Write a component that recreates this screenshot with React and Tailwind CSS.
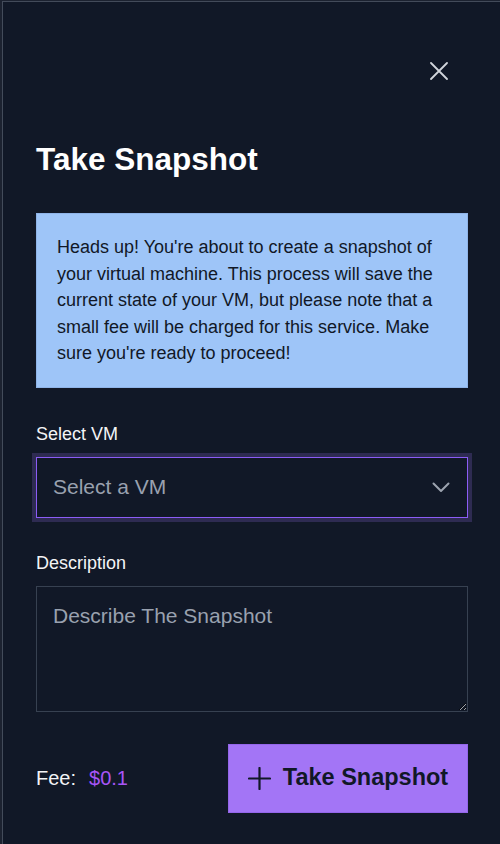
import React, { useState } from 'react';

const XIcon = () => (
  <svg width="18" height="18" viewBox="0 0 18 18" fill="none" stroke="#d1d5db" strokeWidth="1.8" strokeLinecap="round">
    <path d="M1 1L17 17M17 1L1 17" />
  </svg>
);

const ChevronIcon = () => (
  <svg width="18" height="11" viewBox="0 0 18 11" fill="none" stroke="#9ca3af" strokeWidth="2" strokeLinecap="round" strokeLinejoin="round">
    <path d="M1.5 1.5L9 9L16.5 1.5" />
  </svg>
);

const PlusIcon = () => (
  <svg width="23" height="23" viewBox="0 0 23 23" fill="none" stroke="#111827" strokeWidth="2.2" strokeLinecap="round">
    <path d="M11.5 1V22M1 11.5H22" />
  </svg>
);

const App = () => {
  const [description, setDescription] = useState('');

  return (
    <div className="min-h-[844px] bg-[#1c2230] pl-[2px] pt-px font-['Liberation_Sans',Arial,sans-serif]">
      <div className="min-h-[843px] border-l border-t border-[#434b5a] bg-[#111827] pl-[33px] pr-[32px] pt-[60px]">
        {/* close */}
        <div className="flex h-[18px] justify-end pr-5">
          <button type="button" className="block">
            <XIcon />
          </button>
        </div>

        <h2 className="mt-[61px] text-[31.5px] font-bold leading-[36px] text-white">Take Snapshot</h2>

        {/* warning */}
        <div className="mt-[36px] border border-[#8fb4e8] bg-[#9ec5f8] p-5 text-[18px] leading-[26.5px] text-[#111827]">
          Heads up! You're about to create a snapshot of your virtual machine. This process will save the current
          state of your VM, but please note that a small fee will be charged for this service. Make sure you're ready
          to proceed!
        </div>

        <label className="mt-8 mb-[9px] block text-[18px] leading-[28px] text-gray-100">Select VM</label>
        <button
          type="button"
          className="flex h-[61px] w-full items-center justify-between border border-[#8b5cf6] bg-[#111827] pl-4 pr-[17px] ring-4 ring-[#2e2b52]"
        >
          <span className="text-[21px] text-gray-400">Select a VM</span>
          <ChevronIcon />
        </button>

        <label className="mt-[31px] mb-[9px] block text-[18px] leading-[28px] text-gray-100">Description</label>
        <textarea
          value={description}
          onChange={(e) => setDescription(e.target.value)}
          placeholder="Describe The Snapshot"
          className="block h-[126px] w-full border border-[#374151] bg-transparent px-4 py-[15px] text-[21px] leading-[28px] text-gray-100 placeholder:text-gray-400 outline-none"
        />

        <div className="mt-8 flex items-center justify-between">
          <div className="text-[20px] text-gray-100">
            Fee:<span className="ml-[13px] text-[#a855f7]">$0.1</span>
          </div>
          <button
            type="button"
            className="flex h-[69px] w-[240px] items-center justify-center gap-3 border border-[#9466ea] bg-[#a375f6] text-[23.5px] font-bold text-[#111827]"
          >
            <PlusIcon />
            Take Snapshot
          </button>
        </div>
      </div>
    </div>
  );
};

export default App;
